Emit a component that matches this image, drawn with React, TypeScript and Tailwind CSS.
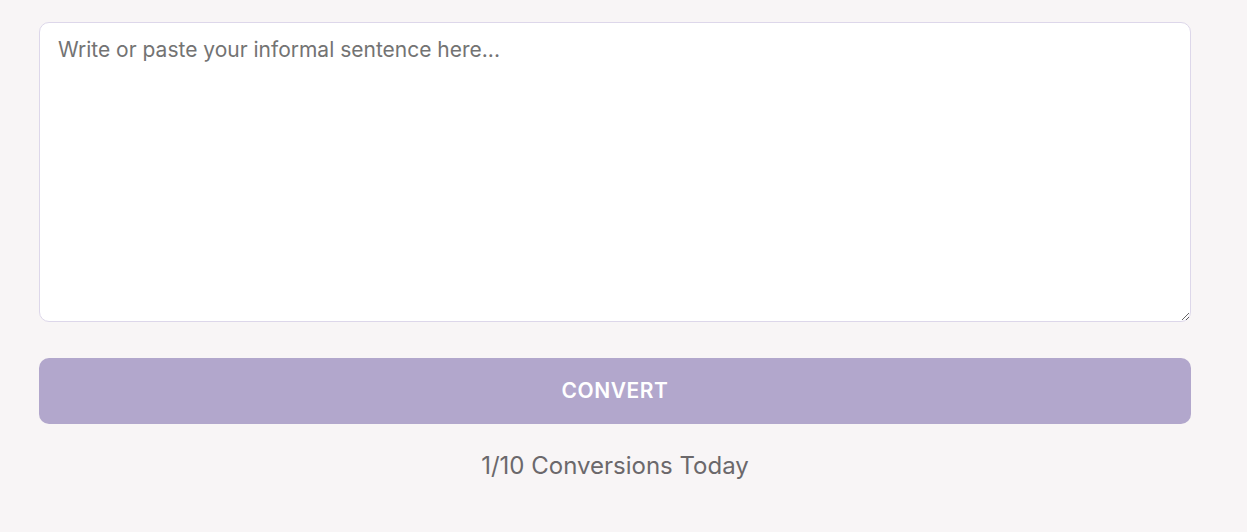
import { useState } from "react"

export default function App() {
  const [text, setText] = useState("")

  return (
    <div
      className="min-h-screen bg-[#f8f5f6] pt-[22px] pl-[39px]"
      style={{ fontFamily: "Inter, 'Noto Sans', sans-serif" }}
    >
      <div className="w-[1152px] flex flex-col items-stretch">
        <textarea
          value={text}
          onChange={(e) => setText(e.target.value)}
          placeholder="Write or paste your informal sentence here..."
          className="h-[300px] w-full rounded-[10px] border border-[#ddd7ea] bg-white px-[18px] py-[12px] text-[21px] leading-[30px] text-gray-800 placeholder:text-[#737373] outline-none"
        />
        <button className="mt-[36px] h-[66px] w-full rounded-[10px] bg-[#b2a7cc] text-[21px] font-semibold tracking-wide text-white">
          CONVERT
        </button>
        <p className="mt-[26px] text-center text-[24px] leading-[32px] text-[#6b686b]">
          1/10 Conversions Today
        </p>
      </div>
    </div>
  )
}
